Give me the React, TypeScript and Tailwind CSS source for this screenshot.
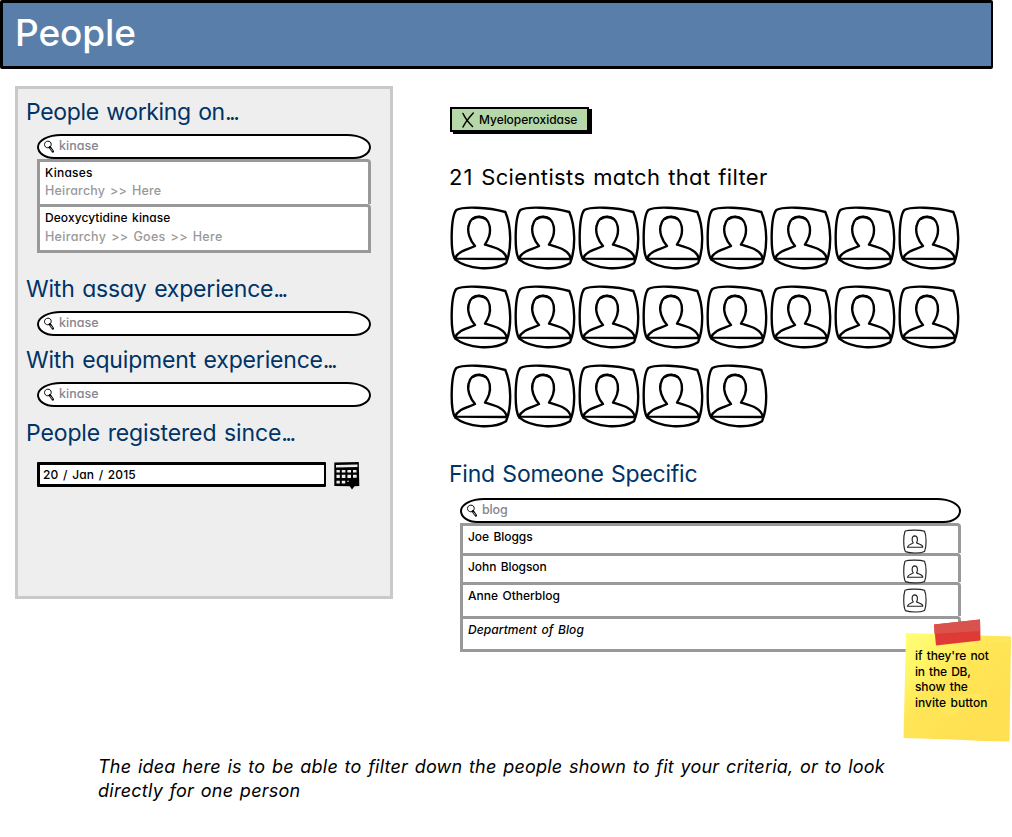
import type { ReactNode } from "react";

function Heading({ className, children, dots }: { className: string; children: ReactNode; dots?: boolean }) {
  return (
    <h2 className={`whitespace-nowrap text-[23px] leading-[28px] text-[#003366] ${className}`}>
      {children}
      {dots && <span className="tracking-[-2.5px]">...</span>}
    </h2>
  );
}

function Magnifier() {
  return (
    <svg className="mt-[1.5px] h-[13px] w-3 shrink-0" viewBox="0 0 12 13" fill="none" stroke="#000">
      <path d="M4.8 1.2C6.9 1 8.3 2.5 8.2 4.5 8.1 6.5 6.7 7.8 4.8 7.8 2.8 7.7 1.5 6.4 1.5 4.5 1.6 2.6 2.8 1.3 4.8 1.2Z" strokeWidth="1" />
      <path d="M6.9 7.2 9.8 11.4" strokeWidth="2.4" strokeLinecap="round" />
      <path d="M7.5 8.3 9.6 11.2" stroke="#fff" strokeWidth=".7" />
    </svg>
  );
}

function Search({ className, value, tracking }: { className: string; value: string; tracking: string }) {
  return (
    <div
      className={`flex h-[25px] items-start border-2 border-black bg-white pl-1 pt-[2px] rounded-[24px_24px_17px_17px/13px_13px_12px_12px] ${className}`}
    >
      <Magnifier />
      <span className={`ml-1 text-[12.5px] font-medium leading-4 text-[#858591] ${tracking}`}>{value}</span>
    </div>
  );
}

function Avatar({ className }: { className: string }) {
  return (
    <svg className={className} viewBox="0 0 186 192" fill="none" stroke="#000" strokeWidth="7.2" strokeLinejoin="round" strokeLinecap="round">
      <path d="M19 12C38 1 113 3 166 18 184 60 186 128 168 172 130 196 52 190 16 161 0 140 2 32 19 12Z" fill="#fff" />
      <path d="M15 158C22 136 52 132 75 120 60 103 51 78 56 59 60 39 72 32 88 32 106 32 115 42 119 61 123 84 115 99 105 116 128 123 168 131 170 159Z" />
      <path d="M70 38Q87 28 107 39" />
    </svg>
  );
}

function PanelAvatar() {
  return (
    <svg className="mr-[30px] mt-[3px] h-[25px] w-[26px] shrink-0" viewBox="0 0 26 25" fill="none" stroke="#222" strokeWidth="1.15" strokeLinejoin="round">
      <path d="M3 2.2C6 .9 18 .6 22.5 2.3 24.6 7 24.6 17 22.6 22.4 18 24.6 8 24.5 3.4 22.6 1.2 18 1.3 7 3 2.2Z" />
      <path d="M5.4 18.3C6 15.4 9.500 15.300 11.300 13.900 9.500 12 9.600 7 12.600 6.900 15.900 6.900 16 11.300 14.500 13.800 16.400 15.400 20.600 15 20.800 18.100Z" />
    </svg>
  );
}

function Calendar() {
  return (
    <svg className="ml-2 h-[28px] w-[26px]" viewBox="0 0 26 28">
      <path d="M.3.5 24.8 0 25.3 24 20.5 24.2 18 27.5 15.8 24.3.3 24Z" fill="#000" />
      <g fill="#eee">
        <path d="M2 3 23.5 2.6V5L2 5.4Z" />
        <path d="M2.5 8h3.3v2.6H2.5zM7.8 8h3.6v2.6H7.8zM13.4 8h3.6v2.6h-3.6zM19 8h3.5v2.4H19z" />
        <path d="M2.5 12.8h3.3v3.3H2.5zM7.8 12.8h3.6v3.3H7.8zM13.4 12.8h3.6v3.3h-3.6zM19 12.8h3.7v3H19z" />
        <path d="M2.5 18.8h3.3v2.6H2.5zM7.8 18.8h3.4v2.6H7.8zM13.2 18.8h1.6v1h-1.6z" />
      </g>
    </svg>
  );
}

function Suggestion({ className, children }: { className: string; children: ReactNode }) {
  return (
    <div className={`flex w-[334px] flex-col whitespace-nowrap rounded-tr-[4px] border-[3px] border-[#999] bg-white pl-[5px] pt-0.5 text-[12px] font-medium leading-[18px] ${className}`}>
      {children}
    </div>
  );
}

function Person({ className, children, avatar }: { className: string; children: ReactNode; avatar?: boolean }) {
  return (
    <div className={`flex justify-between whitespace-nowrap rounded-tr-[4px] border-[#999] bg-white pl-[5px] text-[12px] font-medium leading-[18px] ${className}`}>
      <span className="pt-[1.5px]">{children}</span>
      {avatar && <PanelAvatar />}
    </div>
  );
}

export default function App() {
  return (
    <div className="relative flex h-[837px] w-[1012px] flex-col overflow-hidden bg-white font-['Inter','Open_Sans',sans-serif] text-black [font-feature-settings:'cv11'] [word-spacing:0.08em]">
      <header className="h-[69px] w-[993px] shrink-0 rounded-[2px] border-[3px] border-r-2 border-black bg-[#5a7eaa] pl-[12px]">
        <h1 className="pt-[6px] text-[37px] font-medium leading-[48px] tracking-[-0.1px] text-white">People</h1>
      </header>

      <main className="mt-px flex h-[583px] shrink-0">
        <aside className="ml-[15px] mt-4 h-[513px] w-[378px] shrink-0 border-[3px] border-[#c9c9c9] bg-[#eee] pl-[8px] pt-[9px]">
          <Heading className="tracking-[-0.35px]" dots>People working on</Heading>
          <div className="ml-[11px]">
            <Search className="mt-2 w-[334px]" value="kinase" tracking="tracking-[0.05px]" />
            <Suggestion className="h-[45px] border-b-0">
              <span className="tracking-[0.25px]">Kinases</span>
              <span className="text-[12.5px] leading-[17px] tracking-[0.2px] text-[#999]">Heirarchy &gt;&gt; Here</span>
            </Suggestion>
            <Suggestion className="h-[49px]">
              <span className="tracking-[0.07px]">Deoxycytidine kinase</span>
              <span className="text-[12.5px] leading-[19px] tracking-[0.31px] text-[#999]">Heirarchy &gt;&gt; Goes &gt;&gt; Here</span>
            </Suggestion>
          </div>
          <Heading className="mt-[22px] tracking-[-0.19px]" dots>With assay experience</Heading>
          <Search className="ml-[11px] mt-[8px] w-[334px]" value="kinase" tracking="tracking-[0.05px]" />
          <Heading className="mt-[10px] tracking-[-0.18px]" dots>With equipment experience</Heading>
          <Search className="ml-[11px] mt-[8px] w-[334px]" value="kinase" tracking="tracking-[0.05px]" />
          <Heading className="mt-[12px] tracking-[-0.13px]" dots>People registered since</Heading>
          <div className="ml-[11px] mt-[15px] flex">
            <div className="h-[25px] w-[289px] rounded-[1px] border-[3px] border-r-2 border-black bg-white pl-[3px] text-[12px] font-medium leading-[19px] tracking-[0.12px]">
              20 / Jan / 2015
            </div>
            <Calendar />
          </div>
        </aside>

        <section className="ml-[56px] pt-[37px]">
          <button className="ml-px flex h-[25px] w-[139px] items-center whitespace-nowrap border-2 border-black bg-[#b6d7a8] pl-[10px] text-[12px] font-medium leading-[18px] shadow-[3px_2px_0_#000]">
            <svg className="mt-px h-4 w-3 shrink-0" viewBox="0 0 12 16" fill="none" stroke="#000" strokeWidth="1.5" strokeLinecap="round">
              <path d="M1 1.5C3 6 7 11 10.5 14.5M11.3 1C8 4.5 3.5 10 1 15" />
            </svg>
            <span className="ml-[5px] mt-px tracking-[-0.04px]">Myeloperoxidase</span>
          </button>
          <h2 className="mt-[31px] whitespace-nowrap text-[22px] leading-[28px] tracking-[0.36px]">
            <span className="tracking-[1px]">21</span> Scientists match that filter
          </h2>
          <div className="ml-px mt-[15px] grid w-[512px] grid-cols-8 gap-y-[15px]">
            {Array.from({ length: 21 }, (_, i) => (
              <Avatar key={i} className="h-16 w-[62px]" />
            ))}
          </div>
          <Heading className="mt-[32px] tracking-[-0.24px]">Find Someone Specific</Heading>
          <div className="ml-[11px] mt-[10px] w-[501px]">
            <Search className="" value="blog" tracking="tracking-[-0.16px]" />
            <Person className="h-[30px] border-x-[3px] border-t-[3px]" avatar><span className="tracking-[-0.05px]">Joe Bloggs</span></Person>
            <Person className="h-[29px] border-x-[3px] border-t-[3px]" avatar><span className="tracking-[-0.08px]">John Blogson</span></Person>
            <Person className="h-[34px] border-x-[3px] border-t-[3px]" avatar>Anne Otherblog</Person>
            <Person className="h-[36px] border-[3px]"><span className="italic tracking-[0.06px]">Department of Blog</span></Person>
          </div>
        </section>
      </main>

      <p className="ml-[98px] mt-[102px] whitespace-nowrap text-[18px] italic leading-[24px]">
        <span className="tracking-[0.225px]">The idea here is to be able to filter down the people shown to fit your criteria, or to look</span>
        <br />
        <span className="tracking-[0.25px]">directly for one person</span>
      </p>

      <div className="absolute left-[902px] top-[618px] h-[126px] w-[110px] pl-[13px] pt-[30px] text-[12px] font-medium leading-[15.7px]">
        <svg className="absolute left-0 top-0 h-[126px] w-[110px]" viewBox="0 0 110 126">
          <defs>
            <linearGradient id="paper" x1="0" y1="0" x2=".75" y2=".8">
              <stop offset="0" stopColor="#ffff78" />
              <stop offset=".3" stopColor="#fff566" />
              <stop offset=".55" stopColor="#ffe656" />
              <stop offset="1" stopColor="#ffe052" />
            </linearGradient>
          </defs>
          <path d="M4 15 109 18.5 107.5 123.5 80 123 50 121.5 1.5 120Z" fill="url(#paper)" />
          <path d="M35 90 62 76 88 74 70 84 48 98ZM72 26 109 19 108.5 24Z" fill="#fff06a" opacity=".3" />
          <path d="M32 6.5 78 1.5 78.5 22.5 34 27.5Z" fill="#e03a36" />
          <path d="M32 6.5 78 1.5 78.2 13 32.5 16Z" fill="#d9534c" />
        </svg>
        <div className="relative flex flex-col whitespace-nowrap">
          <span className="tracking-[-0.12px]">if they&apos;re not</span>
          <span className="tracking-[-0.2px]">in the DB,</span>
          <span className="tracking-[-0.1px]">show the</span>
          <span className="tracking-[0.02px]">invite button</span>
        </div>
      </div>
    </div>
  );
}
